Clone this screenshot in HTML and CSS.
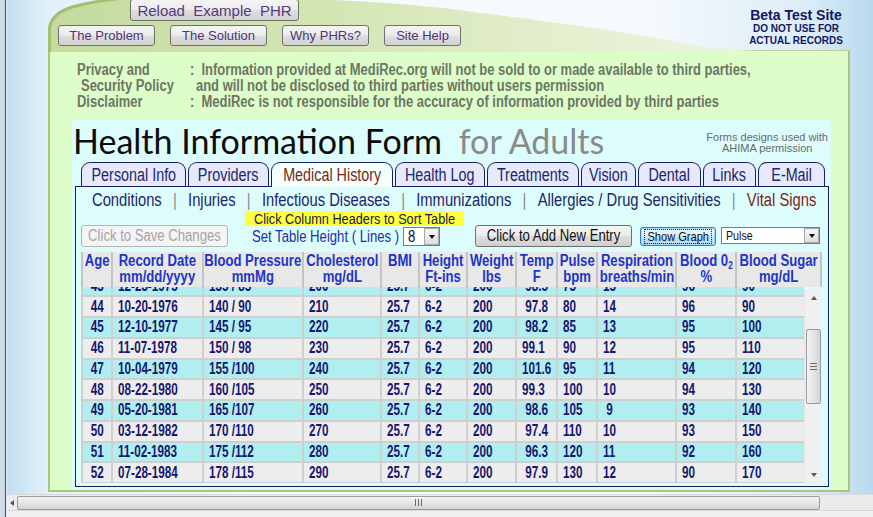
FILE: index.html
```html
<!DOCTYPE html>
<html>
<head>
<meta charset="utf-8">
<title>MediRec - Health Information Form</title>
<link rel="stylesheet" href="styles.css">
</head>
<body>
<div class="window">
  <div class="viewport">
    <div class="edge"></div>
    <div class="canvas">
      <div class="panel">
        <div class="panel-top">
          <svg class="swoosh" width="803" height="52" viewBox="0 0 803 52">
            <defs>
              <linearGradient id="sw" x1="0" y1="0" x2="1" y2="0">
                <stop offset="0" stop-color="#c4da9e"/>
                <stop offset="0.35" stop-color="#d2e4b0"/>
                <stop offset="0.7" stop-color="#e2eecb"/>
                <stop offset="0.9" stop-color="#e9f3dc"/>
              </linearGradient>
            </defs>
            <path d="M0,52 L0,30 C0,18 10,9 26,5 C60,-4 150,-6 250,-2 C330,2 390,6 432,13 C540,26 600,36 640,44 C660,48 680,50 710,51 L710,52 Z" fill="url(#sw)"/>
            <path d="M1.5,52 L1.5,30 C1.5,19 11,10.5 26,6.5 C50,0 80,-3 110,-4" fill="none" stroke="#a2c072" stroke-width="3"/>
          </svg>
          <div class="top-buttons">
            <div class="row-reload"><button class="btn reload">Reload&nbsp; Example&nbsp; PHR</button></div>
            <div class="row-nav">
              <button class="btn nav w97">The Problem</button>
              <button class="btn nav w97">The Solution</button>
              <button class="btn nav w87">Why PHRs?</button>
              <button class="btn nav w77">Site Help</button>
            </div>
          </div>
          <div class="beta">
            <div class="beta-title">Beta Test Site</div>
            <div class="beta-note">DO NOT USE FOR<br>ACTUAL RECORDS</div>
          </div>
        </div>
        <div class="panel-body">
          <div class="privacy">
            <div class="p-label"><span class="n">Privacy and</span></div>
            <div class="p-text"><span class="n">:  Information provided at MediRec.org will not be sold to or made available to third parties,</span></div>
            <div class="p-label indent"><span class="n">Security Policy</span></div>
            <div class="p-text cont"><span class="n">and will not be disclosed to third parties without users permission</span></div>
            <div class="p-label"><span class="n">Disclaimer</span></div>
            <div class="p-text"><span class="n">:  MediRec is not responsible for the accuracy of information provided by third parties</span></div>
          </div>
          <div class="form-area">
            <div class="title-row">
              <h1 class="title">Health Information Form <span class="sub">for Adults</span></h1>
              <div class="credit">Forms designs used with<br>AHIMA permission</div>
            </div>
            <div class="tabwrap">
              <div class="tabs">
                <div class="tab t1"><span class="nc">Personal Info</span></div>
                <div class="tab t2"><span class="nc">Providers</span></div>
                <div class="tab t3 active"><span class="nc">Medical History</span></div>
                <div class="tab t4"><span class="nc">Health Log</span></div>
                <div class="tab t5"><span class="nc">Treatments</span></div>
                <div class="tab t6"><span class="nc">Vision</span></div>
                <div class="tab t7"><span class="nc">Dental</span></div>
                <div class="tab t8"><span class="nc">Links</span></div>
                <div class="tab t9"><span class="nc">E-Mail</span></div>
              </div>
              <div class="tabbox">
                <div class="subtabs"><span class="n"><span>Conditions</span><span class="sep">|</span><span>Injuries</span><span class="sep">|</span><span>Infectious Diseases</span><span class="sep">|</span><span>Immunizations</span><span class="sep">|</span><span>Allergies / Drug Sensitivities</span><span class="sep">|</span><span class="current">Vital Signs</span></span></div>
                <div class="controls">
                  <button class="btn2 save" disabled><span class="nc">Click to Save Changes</span></button>
                  <div class="midcol">
                    <div class="hint"><span class="nc">Click Column Headers to Sort Table</span></div>
                    <div class="height-row">
                      <span class="height-label"><span class="n">Set Table Height ( Lines )</span></span>
                      <div class="select sel-lines"><span class="sel-val"><span class="n">8</span></span><span class="sel-btn"><span class="tri"></span></span></div>
                    </div>
                  </div>
                  <button class="btn2 add"><span class="nc">Click to Add New Entry</span></button>
                  <button class="btn2 graph"><span class="focus"><span class="nc">Show Graph</span></span></button>
                  <div class="select sel-pulse"><span class="sel-val"><span class="n">Pulse</span></span><span class="sel-btn"><span class="tri"></span></span></div>
                </div>
                <div class="grid">
                  <table class="thead">
                    <colgroup>
                      <col class="c1"><col class="c2"><col class="c3"><col class="c4"><col class="c5"><col class="c6"><col class="c7"><col class="c8"><col class="c9"><col class="c10"><col class="c11"><col class="c12h">
                    </colgroup>
                    <tr>
                      <th><span class="nc">Age</span></th>
                      <th><span class="nc">Record Date<br>mm/dd/yyyy</span></th>
                      <th><span class="nc">Blood Pressure<br>mmMg</span></th>
                      <th><span class="nc">Cholesterol<br>mg/dL</span></th>
                      <th><span class="nc">BMI</span></th>
                      <th><span class="nc">Height<br>Ft-ins</span></th>
                      <th><span class="nc">Weight<br>lbs</span></th>
                      <th><span class="nc">Temp<br>F</span></th>
                      <th><span class="nc">Pulse<br>bpm</span></th>
                      <th><span class="nc">Respiration<br>breaths/min</span></th>
                      <th><span class="nc">Blood 0<sub>2</sub><br>%</span></th>
                      <th><span class="nc">Blood Sugar<br>mg/dL</span></th>
                    </tr>
                  </table>
                  <div class="gbody">
                    <div class="rows">
                      <table class="tbody">
                        <colgroup>
                          <col class="c1"><col class="c2"><col class="c3"><col class="c4"><col class="c5"><col class="c6"><col class="c7"><col class="c8"><col class="c9"><col class="c10"><col class="c11"><col class="c12">
                        </colgroup>
                        <tr class="cy"><td class="age"><span class="dc">43</span></td><td><span class="d">12-23-1975</span></td><td><span class="d">135 / 85</span></td><td><span class="d">200</span></td><td><span class="d">25.7</span></td><td><span class="d">6-2</span></td><td><span class="d">200</span></td><td><span class="d"> 98.5</span></td><td><span class="d">75</span></td><td><span class="d">15</span></td><td><span class="d">96</span></td><td><span class="d">90</span></td></tr>
                        <tr class="gr"><td class="age"><span class="dc">44</span></td><td><span class="d">10-20-1976</span></td><td><span class="d">140 / 90</span></td><td><span class="d">210</span></td><td><span class="d">25.7</span></td><td><span class="d">6-2</span></td><td><span class="d">200</span></td><td><span class="d"> 97.8</span></td><td><span class="d">80</span></td><td><span class="d">14</span></td><td><span class="d">96</span></td><td><span class="d">90</span></td></tr>
                        <tr class="cy"><td class="age"><span class="dc">45</span></td><td><span class="d">12-10-1977</span></td><td><span class="d">145 / 95</span></td><td><span class="d">220</span></td><td><span class="d">25.7</span></td><td><span class="d">6-2</span></td><td><span class="d">200</span></td><td><span class="d"> 98.2</span></td><td><span class="d">85</span></td><td><span class="d">13</span></td><td><span class="d">95</span></td><td><span class="d">100</span></td></tr>
                        <tr class="gr"><td class="age"><span class="dc">46</span></td><td><span class="d">11-07-1978</span></td><td><span class="d">150 / 98</span></td><td><span class="d">230</span></td><td><span class="d">25.7</span></td><td><span class="d">6-2</span></td><td><span class="d">200</span></td><td><span class="d">99.1</span></td><td><span class="d">90</span></td><td><span class="d">12</span></td><td><span class="d">95</span></td><td><span class="d">110</span></td></tr>
                        <tr class="cy"><td class="age"><span class="dc">47</span></td><td><span class="d">10-04-1979</span></td><td><span class="d">155 /100</span></td><td><span class="d">240</span></td><td><span class="d">25.7</span></td><td><span class="d">6-2</span></td><td><span class="d">200</span></td><td><span class="d">101.6</span></td><td><span class="d">95</span></td><td><span class="d">11</span></td><td><span class="d">94</span></td><td><span class="d">120</span></td></tr>
                        <tr class="gr"><td class="age"><span class="dc">48</span></td><td><span class="d">08-22-1980</span></td><td><span class="d">160 /105</span></td><td><span class="d">250</span></td><td><span class="d">25.7</span></td><td><span class="d">6-2</span></td><td><span class="d">200</span></td><td><span class="d">99.3</span></td><td><span class="d">100</span></td><td><span class="d">10</span></td><td><span class="d">94</span></td><td><span class="d">130</span></td></tr>
                        <tr class="cy"><td class="age"><span class="dc">49</span></td><td><span class="d">05-20-1981</span></td><td><span class="d">165 /107</span></td><td><span class="d">260</span></td><td><span class="d">25.7</span></td><td><span class="d">6-2</span></td><td><span class="d">200</span></td><td><span class="d"> 98.6</span></td><td><span class="d">105</span></td><td><span class="d"> 9</span></td><td><span class="d">93</span></td><td><span class="d">140</span></td></tr>
                        <tr class="gr"><td class="age"><span class="dc">50</span></td><td><span class="d">03-12-1982</span></td><td><span class="d">170 /110</span></td><td><span class="d">270</span></td><td><span class="d">25.7</span></td><td><span class="d">6-2</span></td><td><span class="d">200</span></td><td><span class="d"> 97.4</span></td><td><span class="d">110</span></td><td><span class="d">10</span></td><td><span class="d">93</span></td><td><span class="d">150</span></td></tr>
                        <tr class="cy"><td class="age"><span class="dc">51</span></td><td><span class="d">11-02-1983</span></td><td><span class="d">175 /112</span></td><td><span class="d">280</span></td><td><span class="d">25.7</span></td><td><span class="d">6-2</span></td><td><span class="d">200</span></td><td><span class="d"> 96.3</span></td><td><span class="d">120</span></td><td><span class="d">11</span></td><td><span class="d">92</span></td><td><span class="d">160</span></td></tr>
                        <tr class="gr"><td class="age"><span class="dc">52</span></td><td><span class="d">07-28-1984</span></td><td><span class="d">178 /115</span></td><td><span class="d">290</span></td><td><span class="d">25.7</span></td><td><span class="d">6-2</span></td><td><span class="d">200</span></td><td><span class="d"> 97.9</span></td><td><span class="d">130</span></td><td><span class="d">12</span></td><td><span class="d">90</span></td><td><span class="d">170</span></td></tr>
                      </table>
                    </div>
                    <div class="vscroll">
                      <div class="arrow up"></div>
                      <div class="vtrack">
                        <div class="vthumb"><span class="grip-h"></span></div>
                      </div>
                      <div class="arrow down"></div>
                    </div>
                  </div>
                </div>
              </div>
            </div>
          </div>
        </div>
      </div>
    </div>
  </div>
  <div class="hscroll">
    <div class="edge"></div>
    <div class="hbar">
      <div class="harrow"></div>
      <div class="hthumb"><span class="grip-v"></span></div>
    </div>
  </div>
  <div class="status">
    <div class="edge"></div>
    <div class="status-fill"></div>
  </div>
</div>
</body>
</html>
```

FILE: styles.css
```css
* { box-sizing: border-box; }
html, body { margin: 0; padding: 0; }
body {
  width: 873px;
  height: 517px;
  overflow: hidden;
  font-family: "Liberation Sans", Arial, sans-serif;
  background: #f0f0f0;
}
/* Arial-Narrow style text: Liberation Sans condensed horizontally */
.n {
  display: inline-block;
  white-space: pre;
  transform: scaleX(0.82);
  transform-origin: 0 50%;
}
.nc {
  display: block;
  width: 122%;
  margin-left: -11%;
  text-align: center;
  white-space: nowrap;
  transform: scaleX(0.82);
  transform-origin: 50% 50%;
}
/* table data: slightly narrower */
.d {
  display: inline-block;
  white-space: pre;
  transform: scaleX(0.73);
  transform-origin: 0 50%;
}
.dc {
  display: block;
  width: 137%;
  margin-left: -18.5%;
  text-align: center;
  white-space: nowrap;
  transform: scaleX(0.73);
  transform-origin: 50% 50%;
}
.window {
  width: 873px;
  height: 517px;
  display: flex;
  flex-direction: column;
  overflow: hidden;
}
.viewport {
  height: 494px;
  display: flex;
}
.edge {
  width: 7px;
  flex: none;
  background: linear-gradient(to right, #d3dfea 0, #c9d8e6 5px, #46505a 5px, #46505a 6px, #e6eef4 6px);
}
.canvas {
  flex: 1;
  padding-left: 41px;
  background: linear-gradient(to right, #c0dff1 0, #e2f1f9 40px, #f5fbfe 250px, #f3f9fd 650px, #dcedf8 800px, #b7d9ee 866px);
}
.panel {
  width: 802px;
  height: 492px;
  display: flex;
  flex-direction: column;
}
.panel-top {
  height: 50px;
  position: relative;
  display: flex;
  justify-content: space-between;
}
.swoosh {
  position: absolute;
  left: 0;
  top: 0;
  z-index: 0;
}
.top-buttons, .beta { position: relative; z-index: 1; }
.top-buttons { padding-left: 10px; }
.row-reload { padding-left: 72px; height: 25px; }
.btn {
  font-family: "Liberation Sans", Arial, sans-serif;
  color: #4f3478;
  border: 1px solid #707070;
  border-radius: 3px;
  background: linear-gradient(#f4f4f4 0, #ececec 48%, #dedede 52%, #d2d2d2 100%);
  padding: 0;
  margin: 0;
  cursor: pointer;
}
.reload {
  width: 169px;
  height: 22px;
  font-size: 15px;
  margin-top: -1px;
  color: #553a80;
}
.row-nav { display: flex; gap: 15px; }
.nav { height: 21px; font-size: 13px; }
.w97 { width: 97px; }
.w87 { width: 87px; }
.w77 { width: 77px; }
.beta {
  margin-top: 8px;
  margin-right: 5px;
  width: 98px;
  text-align: center;
  color: #141660;
}
.beta-title { font-size: 14px; font-weight: bold; line-height: 15px; }
.beta-note { font-size: 10px; font-weight: bold; line-height: 12px; }

.panel-body {
  height: 442px;
  background: #ddfdc9;
  border: 2px solid #a9c67d;
  border-top: 1px solid #c3cf96;
  padding-top: 11px;
}
.privacy {
  display: grid;
  grid-template-columns: 113px 1fr;
  margin-left: 27px;
  font-weight: bold;
  font-size: 15.8px;
  line-height: 16px;
  color: #6c7663;
  white-space: nowrap;
}
.p-label.indent { padding-left: 4px; }
.p-text.cont { padding-left: 6px; }

.form-area {
  margin: 10px 0 0 22px;
  width: 759px;
  height: 369px;
  background: #ddfdfd;
}
.title-row {
  height: 42px;
  display: flex;
  justify-content: space-between;
  align-items: flex-start;
}
.title {
  margin: 0;
  padding-left: 1px;
  font-family: Lato, "Open Sans", sans-serif;
  font-weight: 400;
  font-size: 34px;
  line-height: 42px;
  color: #0c0c0c;
  white-space: nowrap;
}
.title .sub { color: #8a8a8a; padding-left: 8px; }
.credit {
  margin-top: 12px;
  margin-right: 3px;
  font-size: 11px;
  line-height: 11px;
  color: #6a6a6a;
  text-align: center;
}
.tabwrap { margin-left: 3px; width: 754px; }
.tabs {
  display: flex;
  gap: 2px;
  padding-left: 6px;
  height: 24px;
  font-size: 17.5px;
}
.tab {
  height: 24px;
  padding: 0;
  border: 1px solid #1c2060;
  border-bottom: none;
  border-radius: 9px 9px 0 0;
  background: #e6e8fb;
  color: #1e2668;
  line-height: 24px;
  position: relative;
  z-index: 1;
}
.tab.active { background: #f4fffe; color: #772a14; height: 25px; }
.t1 { width: 105px; }
.t2 { width: 81px; }
.t3 { width: 122px; }
.t4 { width: 90px; }
.t5 { width: 92px; }
.t6 { width: 55px; }
.t7 { width: 63px; }
.t8 { width: 53px; }
.t9 { width: 67px; }
.tabbox {
  height: 301px;
  border: 1px solid #1a1d5a;
  background: #ddfdfd;
}
.subtabs {
  height: 25px;
  padding: 1px 0 0 16px;
  font-size: 18px;
  line-height: 24px;
  color: #1e2668;
  white-space: nowrap;
}
.subtabs .sep { color: #8a8a8a; padding: 0 13.7px; }
.subtabs .current { color: #7a1f16; }

.controls {
  height: 35px;
  display: flex;
  align-items: flex-end;
  padding-left: 5px;
}
.btn2 {
  font-family: "Liberation Sans", Arial, sans-serif;
  font-size: 16px;
  height: 22px;
  padding: 0;
  margin: 0;
  border-radius: 3px;
}
.save {
  width: 147px;
  color: #a4a4a4;
  background: #f4f4f4;
  border: 1px solid #b4b4b4;
}
.midcol {
  margin-left: 17px;
  width: 230px;
  display: flex;
  flex-direction: column;
}
.hint {
  width: 219px;
  height: 15px;
  background: #ffff3c;
  color: #1a1a3a;
  font-size: 15.5px;
  line-height: 15px;
}
.height-row {
  display: flex;
  align-items: center;
  height: 21px;
  padding-left: 7px;
}
.height-label { color: #1b30a6; font-size: 16px; width: 151px; }
.select {
  display: flex;
  align-items: center;
  background: #fff;
  border: 1px solid #7d7d7d;
  font-size: 13px;
  color: #111;
}
.sel-val { flex: 1; padding-left: 4px; }
.sel-btn {
  width: 15px;
  height: 100%;
  border: 1px solid #a8a8a8;
  background: linear-gradient(#f6f6f6, #dedede);
  display: flex;
  align-items: center;
  justify-content: center;
}
.tri {
  width: 0; height: 0;
  border-left: 3.5px solid transparent;
  border-right: 3.5px solid transparent;
  border-top: 4px solid #111;
}
.sel-lines { width: 37px; height: 19px; font-size: 16px; }
.add {
  width: 157px;
  color: #111;
  border: 1px solid #707070;
  background: linear-gradient(#f4f4f4 0, #ececec 48%, #dedede 52%, #d0d0d0 100%);
}
.graph {
  margin-left: 8px;
  margin-bottom: 1px;
  width: 76px;
  height: 19px;
  font-size: 13.5px;
  color: #111;
  border: 1px solid #3c7fb1;
  box-shadow: inset 0 0 0 1px #a6d6f4;
  background: linear-gradient(#eaf6fd 0, #d9f0fc 48%, #bee6fd 52%, #a7d9f5 100%);
  display: flex;
  align-items: center;
  justify-content: center;
}
.graph .focus { display: block; width: 66px; outline: 1px dotted #222; line-height: 13px; }
.sel-pulse { margin-left: 5px; margin-bottom: 3px; width: 99px; height: 17px; }

.grid { margin: 5px 0 0 5px; width: 741px; }
table { border-collapse: separate; table-layout: fixed; }
.c1 { width: 28px; }
.c2 { width: 89px; }
.c3 { width: 98px; }
.c4 { width: 76px; }
.c5 { width: 36px; }
.c6 { width: 46px; }
.c7 { width: 47px; }
.c8 { width: 39px; }
.c9 { width: 38px; }
.c10 { width: 77px; }
.c11 { width: 58px; }
.c12 { width: 67px; }
.c12h { width: 83px; }
.thead {
  width: 741px;
  margin: 0;
  background: #c4c4c4;
  border-spacing: 2px 0;
}
.thead th {
  height: 35px;
  background: #e8e8e8;
  color: #1d35c6;
  font-weight: bold;
  font-size: 16px;
  line-height: 16px;
  vertical-align: top;
  padding: 1px 0 0 0;
  overflow: hidden;
}
.thead sub { font-size: 10px; line-height: 0; vertical-align: -3px; }
.gbody { display: flex; height: 196px; }
.rows { width: 723px; height: 196px; overflow: hidden; }
.tbody {
  width: 723px;
  margin-top: -12.5px;
  background: #cfcfcf;
  border-spacing: 2px;
}
.tbody td {
  height: 18.75px;
  padding: 0 0 0 5px;
  font-weight: bold;
  font-size: 16px;
  line-height: 18px;
  color: #16166e;
  white-space: pre;
  overflow: hidden;
}
.tbody td.age { padding: 0; }
.tbody tr.gr td { background: #ededed; }
.tbody tr.cy td { background: #b0eef0; }

.vscroll {
  width: 18px;
  height: 194px;
  margin-top: 2px;
  background: #f0f0f0;
  border-left: 1px solid #e4e4e4;
  display: flex;
  flex-direction: column;
}
.arrow { height: 17px; display: flex; align-items: center; justify-content: center; }
.arrow::before {
  content: "";
  width: 0; height: 0;
  border-left: 3.5px solid transparent;
  border-right: 3.5px solid transparent;
}
.arrow.up::before { border-bottom: 4px solid #5a5a5a; }
.arrow.down::before { border-top: 4px solid #5a5a5a; }
.vtrack { flex: 1; padding-top: 23px; }
.vthumb {
  width: 15px;
  height: 75px;
  margin-left: 1px;
  border: 1px solid #9a9a9a;
  border-radius: 2px;
  background: linear-gradient(to right, #f2f2f2, #e2e2e2 60%, #d2d2d2);
  display: flex;
  align-items: center;
  justify-content: center;
}
.grip-h {
  width: 7px; height: 7px;
  background: repeating-linear-gradient(#6c6c6c 0, #6c6c6c 1px, transparent 1px, transparent 3px);
}

.hscroll {
  height: 16px;
  display: flex;
}
.hbar {
  flex: 1;
  display: flex;
  align-items: center;
  background: #ebebeb;
  border-top: 1px solid #dadada;
}
.harrow { width: 10px; height: 100%; display: flex; align-items: center; justify-content: center; }
.harrow::before {
  content: "";
  width: 0; height: 0;
  border-top: 3.5px solid transparent;
  border-bottom: 3.5px solid transparent;
  border-right: 4px solid #555;
}
.hthumb {
  width: 803px;
  height: 14px;
  border: 1px solid #9c9c9c;
  border-radius: 2px;
  background: linear-gradient(#f3f3f3, #e4e4e4 55%, #d4d4d4);
  display: flex;
  align-items: center;
  justify-content: center;
}
.grip-v {
  width: 7px; height: 7px;
  background: repeating-linear-gradient(to right, #6a6a6a 0, #6a6a6a 1px, transparent 1px, transparent 3px);
}
.status { height: 7px; display: flex; }
.status-fill { flex: 1; background: #f0f0f0; border-top: 1px solid #d6d6d6; }
```
